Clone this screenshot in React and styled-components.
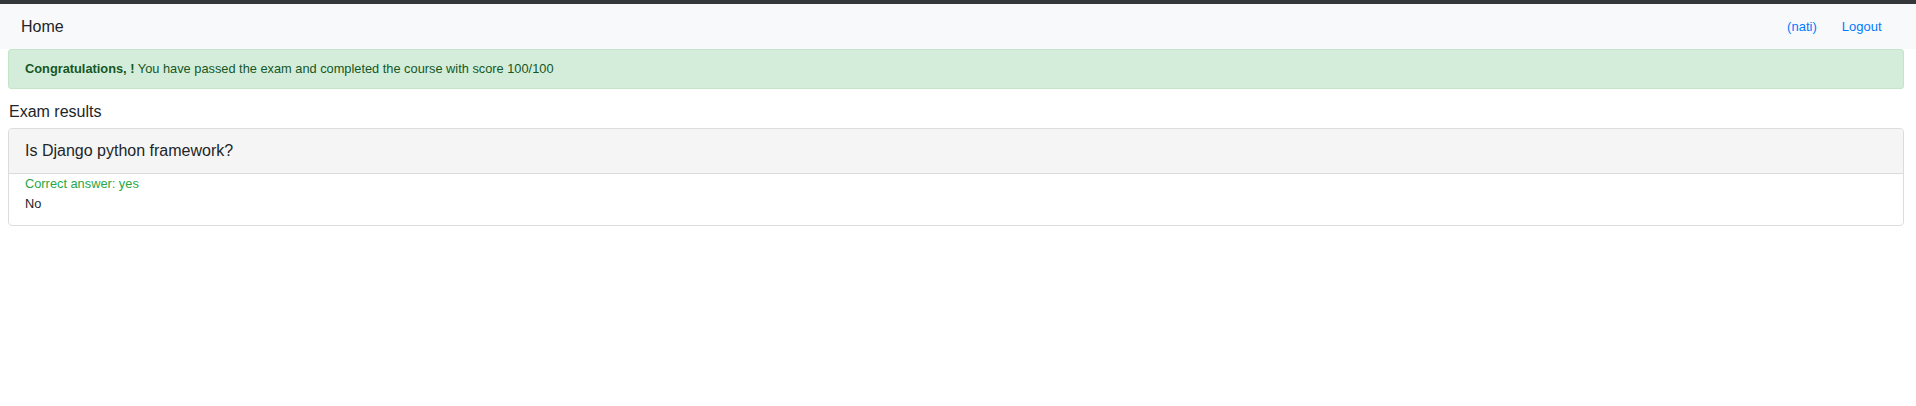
import React from "react"
import styled, { createGlobalStyle } from "styled-components"

const GlobalStyle = createGlobalStyle`
  html, body {
    margin: 0;
    padding: 0;
    background: #fff;
    font-family: "Liberation Sans", Arial, sans-serif;
    color: #212529;
  }
`

const TopBar = styled.div`
  height: 4px;
  background: #35383b;
`

const Navbar = styled.nav`
  display: flex;
  align-items: center;
  justify-content: space-between;
  height: 45px;
  padding: 0 22px 0 17px;
  background: #f8f9fa;
`

const Brand = styled.a`
  padding: 0 4px;
  font-size: 16px;
  line-height: 24px;
  color: #212529;
  text-decoration: none;
`

const NavList = styled.ul`
  display: flex;
  margin: 0;
  padding: 0;
  list-style: none;
`

const NavLink = styled.a`
  display: block;
  padding: 0 12.5px;
  font-size: 13px;
  line-height: 20px;
  color: #007bff;
  text-decoration: none;
`

const Main = styled.main`
  padding: 0 12px 0 8px;
`

const Alert = styled.div`
  box-sizing: border-box;
  height: 40px;
  display: flex;
  align-items: center;
  padding: 0 16px 1px;
  font-size: 12.8px;
  color: #155724;
  background: #d4edda;
  border: 1px solid #c3e6cb;
  border-radius: 3px;
`

const Heading = styled.h5`
  margin: 11px 0 4px 1px;
  font-size: 16px;
  font-weight: normal;
  line-height: 24px;
`

const Card = styled.div`
  border: 1px solid #dcdcdc;
  border-radius: 4px;
  overflow: hidden;
`

const CardHeader = styled.div`
  padding: 10px 16px;
  font-size: 16px;
  line-height: 24px;
  background: #f5f5f5;
  border-bottom: 1px solid #dcdcdc;
`

const CardBody = styled.div`
  padding: 0 16px 11px;
`

const Answer = styled.div`
  font-size: 12.8px;
  line-height: 20px;
  color: ${({ correct }) => correct ? "#28a745" : "#212529"};
`

export default function App() {
  return (
    <>
      <GlobalStyle />
      <TopBar />
      <Navbar>
        <Brand href="#">Home</Brand>
        <NavList>
          <li><NavLink href="#">(nati)</NavLink></li>
          <li><NavLink href="#">Logout</NavLink></li>
        </NavList>
      </Navbar>
      <Main>
        <Alert>
          <span><b>Congratulations, !</b> You have passed the exam and completed the course with score 100/100</span>
        </Alert>
        <Heading>Exam results</Heading>
        <Card>
          <CardHeader>Is Django python framework?</CardHeader>
          <CardBody>
            <Answer correct>Correct answer: yes</Answer>
            <Answer>No</Answer>
          </CardBody>
        </Card>
      </Main>
    </>
  )
}
